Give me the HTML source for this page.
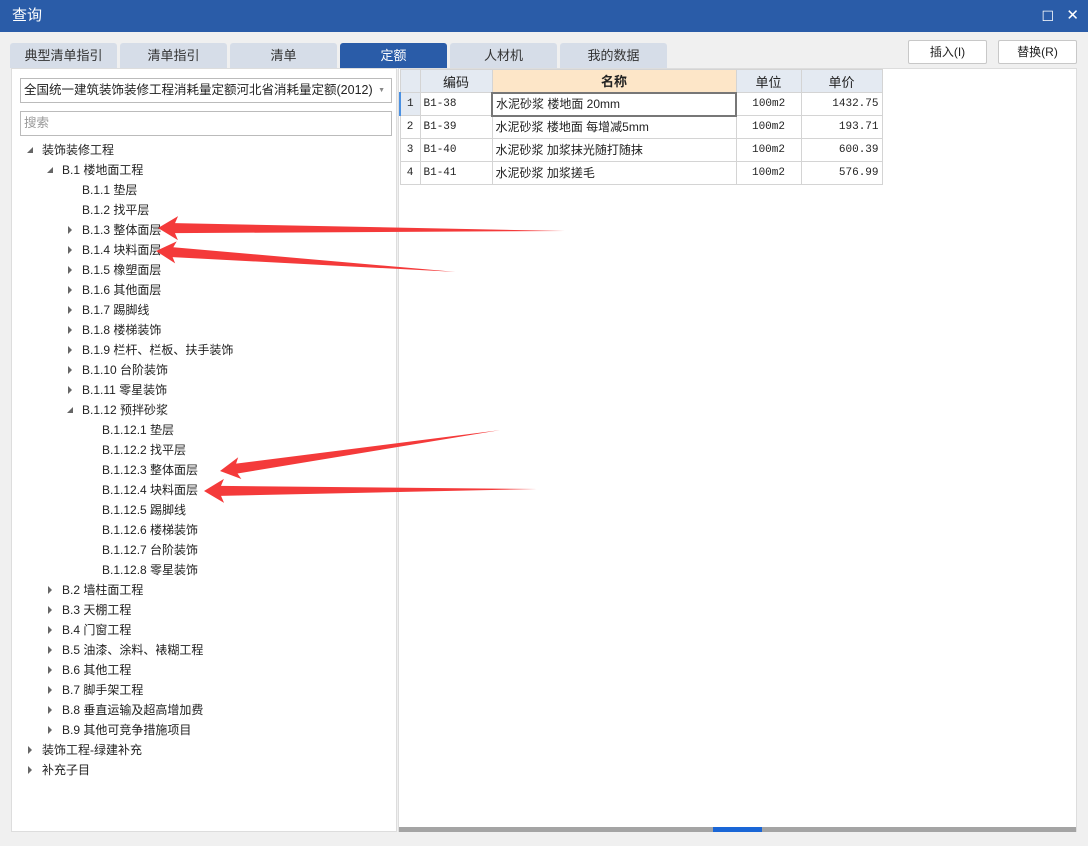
<!DOCTYPE html>
<html><head><meta charset="utf-8"><style>
*{margin:0;padding:0;box-sizing:border-box}
body{width:1088px;height:846px;background:#f0f0f0;font-family:"Liberation Sans","Noto Sans CJK SC",sans-serif;font-size:12px;color:#222;position:relative;overflow:hidden}
.title{position:absolute;left:0;top:0;width:1088px;height:32px;background:#2a5ca8;color:#fff;font-size:15px;line-height:32px;padding-left:12px}
.tab{position:absolute;top:43px;height:25px;width:107px;background:#d6dde8;border-radius:3px 3px 0 0;text-align:center;line-height:25px;font-size:13px;color:#333}
.tab.act{background:#2a5ca8;color:#fff}
.btn{position:absolute;top:40px;height:24px;width:79px;background:#fff;border:1px solid #c8c8c8;border-radius:2px;text-align:center;line-height:22px;font-size:12px}
.left{position:absolute;left:11px;top:68px;width:386px;height:764px;background:#fff;border:1px solid #ddd}
.sel{position:absolute;left:8px;top:9px;width:372px;height:25px;border:1px solid #bbb;line-height:23px;padding-left:3px;font-size:12.5px}
.search{position:absolute;left:8px;top:42px;width:372px;height:25px;border:1px solid #bbb;line-height:23px;padding-left:3px;color:#999;font-size:12.5px}
.tree div{position:absolute;height:20px;line-height:20px;font-size:12px;white-space:nowrap}
.tree .c{width:0;height:0;border-style:solid;border-width:4px 0 4px 4px;border-color:transparent transparent transparent #666}
.tree .e{width:0;height:0;border-style:solid;border-width:0 0 6px 6px;border-color:transparent transparent #666 transparent}
.right{position:absolute;left:398px;top:68px;width:679px;height:764px;background:#fff;border:1px solid #ddd}
table{position:absolute;left:0;top:0;border-collapse:collapse;font-size:12px;table-layout:fixed;width:482px}
td{border:1px solid #d4d4d4;height:23px;padding:0 3px;line-height:21px;vertical-align:middle;white-space:nowrap;overflow:hidden}
th{border:1px solid #d4d4d4;height:23px;background:#e4eaf2;font-weight:normal;font-size:13px}
.mono{font-family:"Liberation Mono","Noto Sans CJK SC",monospace;font-size:11px}
</style></head><body>
<div class="title">查询<span style="position:absolute;right:34px;top:0;font-size:14px">☐</span><span style="position:absolute;right:9px;top:0;font-size:15px">✕</span></div>
<div class="tab" style="left:10px">典型清单指引</div>
<div class="tab" style="left:120px">清单指引</div>
<div class="tab" style="left:230px">清单</div>
<div class="tab act" style="left:340px">定额</div>
<div class="tab" style="left:450px">人材机</div>
<div class="tab" style="left:560px">我的数据</div>
<div class="btn" style="left:908px">插入(I)</div>
<div class="btn" style="left:998px">替换(R)</div>
<div class="left">
<div class="sel">全国统一建筑装饰装修工程消耗量定额河北省消耗量定额(2012)<span style="position:absolute;right:6px;top:0;font-size:7px;color:#888">▼</span></div>
<div class="search">搜索</div>
<div class="tree" id="tree"></div>
</div>
<div class="right">
<table>
<colgroup><col style="width:20px"><col style="width:72px"><col style="width:244px"><col style="width:65px"><col style="width:81px"></colgroup>
<tr><th></th><th>编码</th><th style="background:#fde6c8;font-weight:bold">名称</th><th>单位</th><th>单价</th></tr>
<tr><td style="background:#e4eaf2;text-align:center;border-left:2px solid #4a90e2;padding:0" class="mono">1</td><td class="mono">B1-38</td><td style="border:2px solid #777">水泥砂浆 楼地面 20mm</td><td style="text-align:center" class="mono">100m2</td><td style="text-align:right" class="mono">1432.75</td></tr>
<tr><td style="text-align:center;padding:0" class="mono">2</td><td class="mono">B1-39</td><td>水泥砂浆 楼地面 每增减5mm</td><td style="text-align:center" class="mono">100m2</td><td style="text-align:right" class="mono">193.71</td></tr>
<tr><td style="text-align:center;padding:0" class="mono">3</td><td class="mono">B1-40</td><td>水泥砂浆 加浆抹光随打随抹</td><td style="text-align:center" class="mono">100m2</td><td style="text-align:right" class="mono">600.39</td></tr>
<tr><td style="text-align:center;padding:0" class="mono">4</td><td class="mono">B1-41</td><td>水泥砂浆 加浆搓毛</td><td style="text-align:center" class="mono">100m2</td><td style="text-align:right" class="mono">576.99</td></tr>
</table>
<div style="position:absolute;left:0;top:758px;width:677px;height:5px;background:#a4a4a4"></div>
<div style="position:absolute;left:314px;top:758px;width:49px;height:5px;background:#1a66d6"></div>
</div>
<svg style="position:absolute;left:0;top:0" width="1088" height="846">
<g fill="#f43a3a">
<polygon transform="translate(158,228) rotate(0.42)" points="0,0 20,-12 17,-5 407,0 17,5 20,12"/>
<polygon transform="translate(156,251) rotate(4)" points="0,0 20,-11 17,-5 300,0 17,5 20,11"/>
<polygon transform="translate(220,471) rotate(-8.3)" points="0,0 20,-11 17,-5 283,0 17,5 20,11"/>
<polygon transform="translate(204,491) rotate(-0.34)" points="0,0 20,-12 17,-5 333,0 17,5 20,12"/>
</g></svg>
<script>
var items=[[0,1,'装饰装修工程'],[1,1,'B.1 楼地面工程'],[2,0,'B.1.1 垫层'],[2,0,'B.1.2 找平层'],[2,2,'B.1.3 整体面层'],[2,2,'B.1.4 块料面层'],[2,2,'B.1.5 橡塑面层'],[2,2,'B.1.6 其他面层'],[2,2,'B.1.7 踢脚线'],[2,2,'B.1.8 楼梯装饰'],[2,2,'B.1.9 栏杆、栏板、扶手装饰'],[2,2,'B.1.10 台阶装饰'],[2,2,'B.1.11 零星装饰'],[2,1,'B.1.12 预拌砂浆'],[3,0,'B.1.12.1 垫层'],[3,0,'B.1.12.2 找平层'],[3,0,'B.1.12.3 整体面层'],[3,0,'B.1.12.4 块料面层'],[3,0,'B.1.12.5 踢脚线'],[3,0,'B.1.12.6 楼梯装饰'],[3,0,'B.1.12.7 台阶装饰'],[3,0,'B.1.12.8 零星装饰'],[1,2,'B.2 墙柱面工程'],[1,2,'B.3 天棚工程'],[1,2,'B.4 门窗工程'],[1,2,'B.5 油漆、涂料、裱糊工程'],[1,2,'B.6 其他工程'],[1,2,'B.7 脚手架工程'],[1,2,'B.8 垂直运输及超高增加费'],[1,2,'B.9 其他可竞争措施项目'],[0,2,'装饰工程-绿建补充'],[0,2,'补充子目']];
var h='';items.forEach(function(it,i){var y=71+i*20,x=30+it[0]*20;
if(it[1]==1)h+='<div class="e" style="left:'+(x-15)+'px;top:'+(y+7)+'px"></div>';
if(it[1]==2)h+='<div class="c" style="left:'+(x-14)+'px;top:'+(y+6)+'px"></div>';
h+='<div style="left:'+x+'px;top:'+y+'px">'+it[2]+'</div>';});
document.getElementById('tree').innerHTML=h;
</script>
</body></html>
